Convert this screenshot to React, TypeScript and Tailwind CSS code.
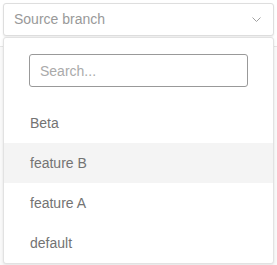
import { useState } from "react";

const branches = ["Beta", "feature B", "feature A", "default"];

export default function App() {
  const [hovered] = useState("feature B");
  const [query, setQuery] = useState("");

  return (
    <div
      className="relative h-[265px] w-[277px] bg-white"
      style={{ fontFamily: "Arial, 'Liberation Sans', sans-serif" }}
    >
      {/* page behind the dropdown */}
      <div className="absolute left-0 right-0 top-[46px] h-[219px] border-t border-[#e6e6e6] bg-[#fafafa]" />

      {/* trigger */}
      <div className="relative px-[3px] pt-[3px]">
        <button className="flex h-[33px] w-full items-center justify-between rounded-[3px] border border-[#dedede] bg-white pl-[10px] pr-[12px] shadow-[0_1px_2px_rgba(0,0,0,0.08)]">
          <span className="text-[14px] text-[#999]">Source branch</span>
          <svg width="9" height="5" viewBox="0 0 9 5" fill="none">
            <path d="M0.5 0.5l4 4 4-4" stroke="#a0a0a0" strokeWidth="1" />
          </svg>
        </button>
      </div>

      {/* dropdown panel */}
      <div className="absolute left-[3px] right-[3px] top-[37px] h-[227px] rounded-[3px] border border-[#e2e2e2] bg-white shadow-[0_1px_3px_rgba(0,0,0,0.1)]">
        <div className="px-[25px] pb-[16px] pt-[16px]">
          <input
            autoFocus
            value={query}
            onChange={(e) => setQuery(e.target.value)}
            placeholder="Search..."
            className="h-[33px] w-full rounded-[3px] border border-[#999] px-[10px] text-[14px] text-[#555] caret-[#333] outline-none placeholder:text-[#aaa]"
          />
        </div>
        <ul>
          {branches.map((b) => (
            <li
              key={b}
              className={`flex h-[40px] items-center px-[26px] text-[14px] text-[#737373] ${
                b === hovered ? "bg-[#f4f4f4]" : ""
              }`}
            >
              {b}
            </li>
          ))}
        </ul>
      </div>
    </div>
  );
}
